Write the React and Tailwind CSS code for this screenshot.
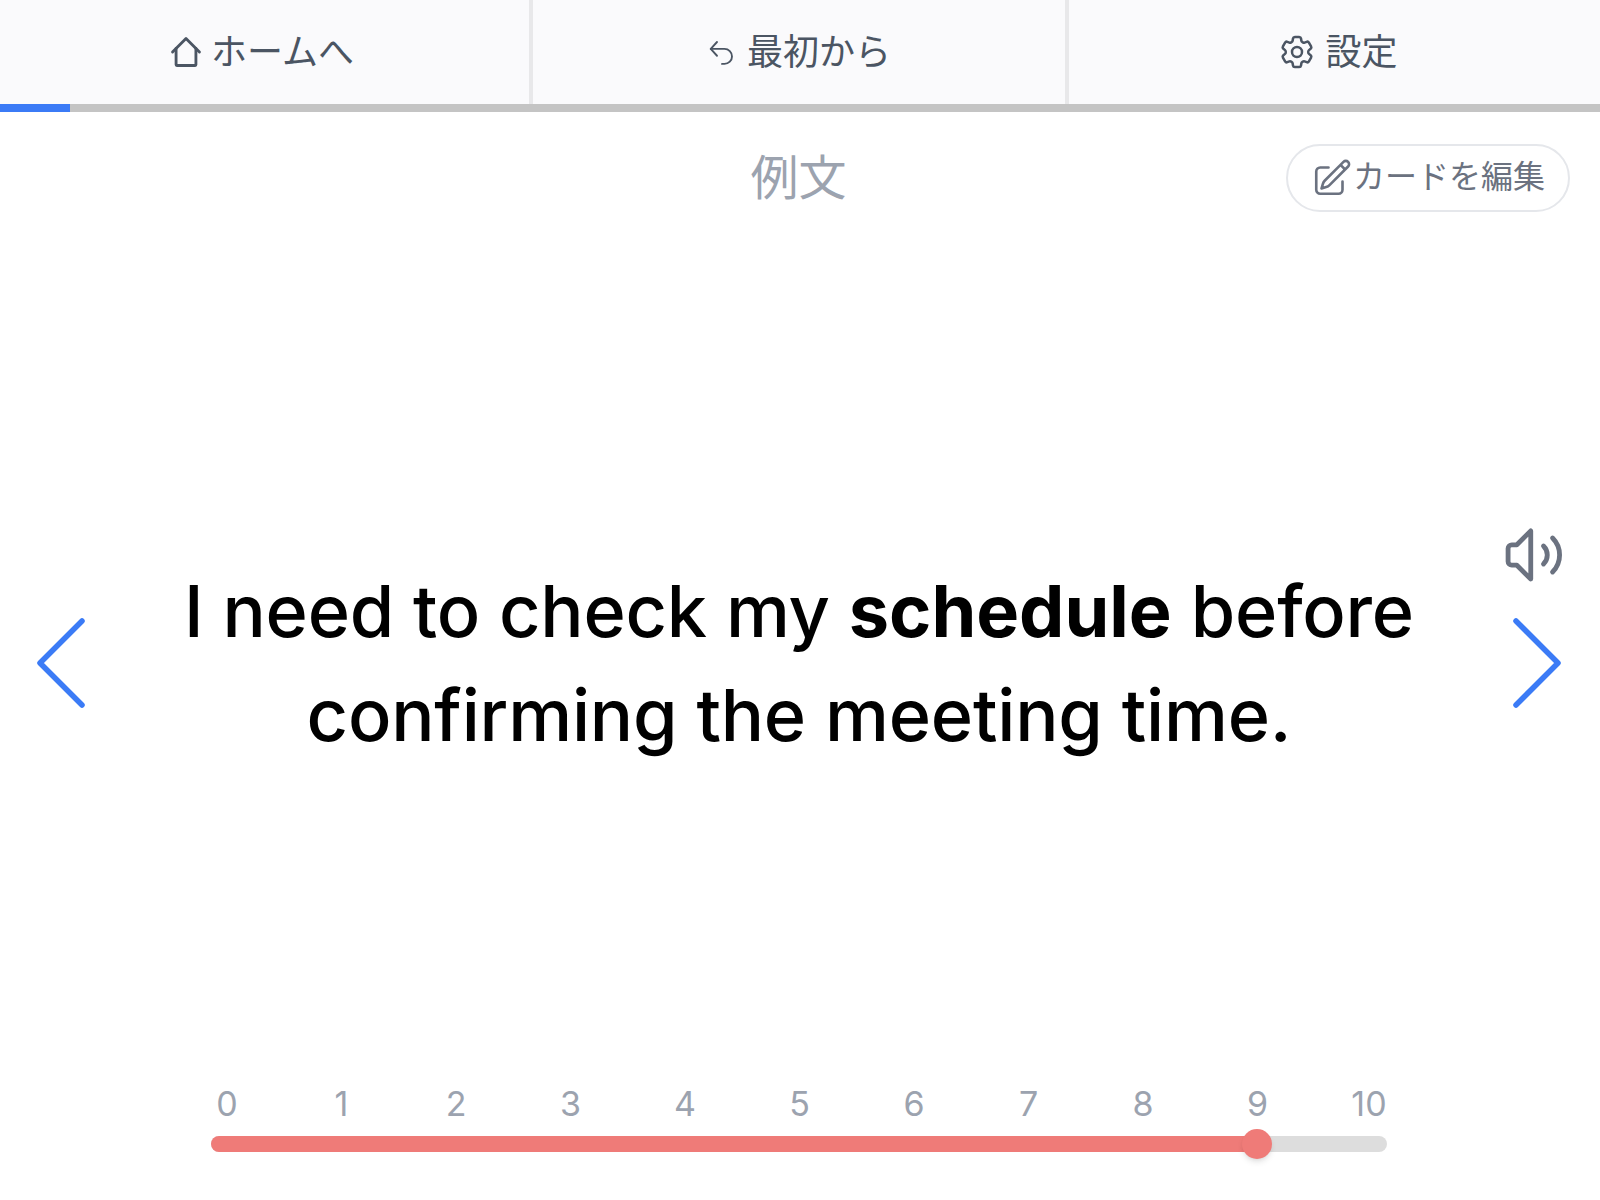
const jp = { fontFamily: 'Inter, "Noto Sans CJK JP", sans-serif' };
const ticks = [0, 1, 2, 3, 4, 5, 6, 7, 8, 9];

function HomeIcon() {
    return (
        <svg width="34" height="34" viewBox="0 0 24 24" fill="none" stroke="currentColor" strokeWidth="2" strokeLinecap="round" strokeLinejoin="round">
            <path d="M2.5 12 12 2.5l9.5 9.5" />
            <path d="M5 9.5V21a.5.5 0 0 0 .5.5h13a.5.5 0 0 0 .5-.5V9.5" />
        </svg>
    );
}

function UndoIcon() {
    return (
        <svg width="30" height="30" viewBox="0 0 24 24" fill="none" stroke="currentColor" strokeWidth="1.5" strokeLinecap="round" strokeLinejoin="round">
            <path d="M8 15 3 9.5 8 4" />
            <path d="M3 9.5h11a6 6 0 0 1 0 12h-2" />
        </svg>
    );
}

function CogIcon() {
    return (
        <svg width="40" height="40" viewBox="0 0 24 24" fill="none" stroke="currentColor" strokeWidth="1.5" strokeLinecap="round" strokeLinejoin="round">
            <path d="M9.594 3.94c.09-.542.56-.94 1.11-.94h2.593c.55 0 1.02.398 1.11.94l.213 1.281c.063.374.313.686.645.87.074.04.147.083.22.127.325.196.72.257 1.075.124l1.217-.456a1.125 1.125 0 0 1 1.37.49l1.296 2.247a1.125 1.125 0 0 1-.26 1.431l-1.003.827c-.293.241-.438.613-.43.992a7.723 7.723 0 0 1 0 .255c-.008.378.137.75.43.991l1.004.827c.424.35.534.955.26 1.43l-1.298 2.247a1.125 1.125 0 0 1-1.369.491l-1.217-.456c-.355-.133-.75-.072-1.076.124a6.47 6.47 0 0 1-.22.128c-.331.183-.581.495-.644.869l-.213 1.281c-.09.543-.56.94-1.11.94h-2.594c-.55 0-1.019-.398-1.11-.94l-.213-1.281c-.062-.374-.312-.686-.644-.87a6.52 6.52 0 0 1-.22-.127c-.325-.196-.72-.257-1.076-.124l-1.217.456a1.125 1.125 0 0 1-1.369-.49l-1.297-2.247a1.125 1.125 0 0 1 .26-1.431l1.004-.827c.292-.24.437-.613.43-.991a6.932 6.932 0 0 1 0-.255c.007-.38-.138-.751-.43-.992l-1.004-.827a1.125 1.125 0 0 1-.26-1.43l1.297-2.247a1.125 1.125 0 0 1 1.37-.491l1.216.456c.356.133.751.072 1.076-.124.072-.044.146-.086.22-.128.332-.183.582-.495.644-.869l.214-1.28Z" />
            <path d="M15 12a3 3 0 1 1-6 0 3 3 0 0 1 6 0Z" />
        </svg>
    );
}

function EditIcon() {
    return (
        <svg width="42" height="42" viewBox="0 0 24 24" fill="none" stroke="currentColor" strokeWidth="1.5" strokeLinecap="round" strokeLinejoin="round">
            <path d="m16.862 4.487 1.687-1.688a1.875 1.875 0 1 1 2.652 2.652L10.582 16.07a4.5 4.5 0 0 1-1.897 1.13L6 18l.8-2.685a4.5 4.5 0 0 1 1.13-1.897l8.932-8.931Zm0 0L19.5 7.125M18 14v4.75A2.25 2.25 0 0 1 15.75 21H5.25A2.25 2.25 0 0 1 3 18.75V8.25A2.25 2.25 0 0 1 5.25 6H10" />
        </svg>
    );
}

function SpeakerIcon() {
    return (
        <svg width="68" height="68" viewBox="0 0 24 24" fill="none" stroke="currentColor" strokeWidth="1.7" strokeLinecap="round" strokeLinejoin="round">
            <path d="M10.5 3.5v17L5.6 15.6H3.8a1.3 1.3 0 0 1-1.3-1.3V9.7a1.3 1.3 0 0 1 1.3-1.3h1.8l4.9-4.9Z" />
            <path d="M15 8.8a4.5 4.5 0 0 1 0 6.4" />
            <path d="M18.2 6a8.5 8.5 0 0 1 0 12" />
        </svg>
    );
}

function Chevron({ d }) {
    return (
        <svg width="48" height="90" viewBox="0 0 48 90" fill="none" stroke="#3b7bf6" strokeWidth="5.5" strokeLinecap="round" strokeLinejoin="round">
            <path d={d} />
        </svg>
    );
}

function NavButton({ icon, label, className }) {
    return (
        <button className={`flex items-center justify-center text-[36px] text-[#4b5563] ${className}`}>
            {icon}
            <span>{label}</span>
        </button>
    );
}

export default function App() {
    return (
        <div className="h-[1200px] w-full flex flex-col bg-white overflow-hidden" style={jp}>
            <div className="flex h-[104px] bg-[#fafafc]">
                <NavButton icon={<HomeIcon />} label="ホームへ" className="w-[533px] gap-2 border-r-4 border-[#e8e8ea] pr-[6px]" />
                <NavButton icon={<UndoIcon />} label="最初から" className="w-[536px] gap-[10px] border-r-4 border-[#e8e8ea]" />
                <NavButton icon={<CogIcon />} label="設定" className="flex-1 gap-2 pl-[6px]" />
            </div>
            <div className="h-2 bg-[#c4c4c4]">
                <div className="h-full w-[70px] bg-[#3b7bf6]"></div>
            </div>

            <div className="grid grid-cols-[1fr_auto_1fr] items-center pt-8 pr-[30px]">
                <div></div>
                <h2 className="text-[48px] leading-[68px] text-[#9ca3af] pl-[27px]">例文</h2>
                <button className="justify-self-end h-[68px] w-[284px] flex items-center justify-center rounded-full border-2 border-[#e5e7eb] text-[32px] leading-[40px] text-[#6b7280]">
                    <EditIcon />
                    <span className="pb-[2px]">カードを編集</span>
                </button>
            </div>

            <div className="relative flex-1 flex items-center justify-between pl-[37px] pr-[39px] pt-[30px]">
                <Chevron d="M45 3 3 45l42 42" />
                <p className="w-[1300px] text-center text-[72px] leading-[104px] font-medium tracking-[-0.2px] text-black">
                    I need to check my <span className="font-bold tracking-normal">schedule</span> before confirming the meeting time.
                </p>
                <Chevron d="M3 3l42 42-42 42" />
                <div className="absolute right-[31px] top-[309px] text-[#6b7280]">
                    <SpeakerIcon />
                </div>
            </div>

            <div className="ml-[211px] w-[1176px] pb-[48px]">
                <div className="flex justify-between pr-[5px] text-[34px] leading-[40px] text-[#9ca3af]">
                    {ticks.map((t) => (
                        <span key={t} className="w-8 flex justify-center">{t}</span>
                    ))}
                    <span className="w-[26px] flex justify-center">10</span>
                </div>
                <div className="relative mt-[12px] h-4 rounded-full bg-[#dddddd]">
                    <div className="h-full w-[1046px] rounded-full bg-[#ef7b78]"></div>
                    <div className="absolute left-[1031px] top-[-7px] h-[30px] w-[30px] rounded-full bg-[#ef7b78] shadow-md"></div>
                </div>
            </div>
        </div>
    );
}
